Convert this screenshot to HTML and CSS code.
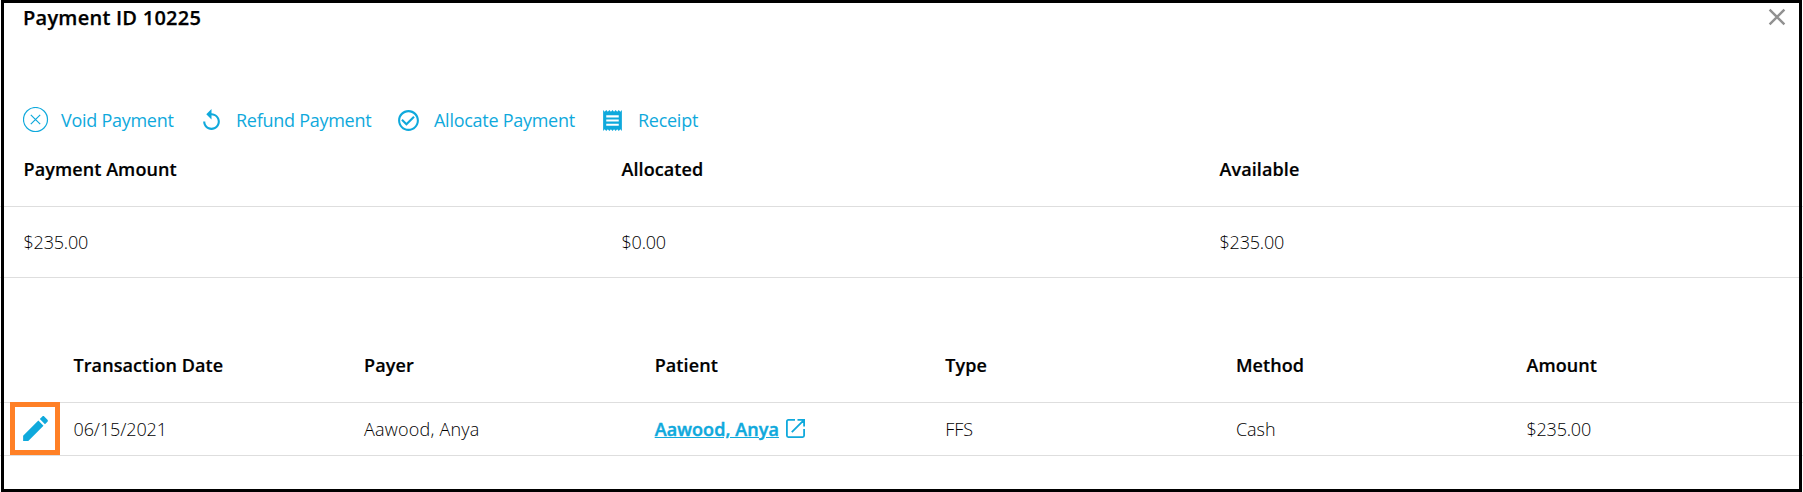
FILE: index.html
```html
<!DOCTYPE html>
<html lang="en">
<head>
<meta charset="utf-8">
<title>Payment ID 10225</title>
<link rel="stylesheet" href="styles.css">
</head>
<body>
<main class="dialog">
  <header class="dialog-header">
    <h1 class="title">Payment ID 10225</h1>
    <svg class="close" width="18" height="18" viewBox="0 0 18 18"><path d="M1.6 1.6 16.4 16.4M16.4 1.6 1.6 16.4"/></svg>
  </header>
  <nav class="actions">
    <a class="action void"><svg width="26" height="26" viewBox="0 0 26 26"><circle class="thin" cx="12.5" cy="12.500" r="12"/><path class="thin" d="M7.800 7.800l9.4 9.4M17.2 7.800l-9.4 9.4"/></svg><span>Void Payment</span></a>
    <a class="action refund"><svg width="25" height="25" viewBox="0 0 24 24"><path d="M12 5V1L7 6l5 5V7c3.31 0 6 2.690 6 6s-2.690 6-6 6-6-2.690-6-6H4c0 4.420 3.580 8 8 8s8-3.580 8-8-3.580-8-8-8z"/></svg><span>Refund Payment</span></a>
    <a class="action allocate"><svg width="25" height="25" viewBox="0 0 24 24"><path d="M16.590 7.580L10 14.170l-3.590-3.580L5 12l5 5 8-8zM12 2C6.480 2 2 6.480 2 12s4.480 10 10 10 10-4.480 10-10S17.520 2 12 2zm0 18c-4.420 0-8-3.580-8-8s3.580-8 8-8 8 3.580 8 8-3.580 8-8 8z"/></svg><span>Allocate Payment</span></a>
    <a class="action receipt"><svg width="25" height="25" viewBox="0 0 24 24"><path d="M18 17H6v-2h12v2zm0-4H6v-2h12v2zm0-4H6V7h12v2zM3 22l1.500-1.500L6 22l1.500-1.500L9 22l1.500-1.500L12 22l1.500-1.500L15 22l1.500-1.500L18 22l1.500-1.500L21 22V2l-1.500 1.500L18 2l-1.500 1.500L15 2l-1.500 1.500L12 2l-1.500 1.500L9 2 7.500 3.500 6 2 4.500 3.500 3 2v20z"/></svg><span>Receipt</span></a>
  </nav>
  <section class="summary">
    <div class="row head"><span>Payment Amount</span><span>Allocated</span><span>Available</span></div>
    <div class="row"><span class="money">$235.00</span><span class="money">$0.00</span><span class="money">$235.00</span></div>
  </section>
  <section class="transactions">
    <div class="row head"><span></span><span>Transaction Date</span><span>Payer</span><span>Patient</span><span>Type</span><span>Method</span><span>Amount</span></div>
    <div class="row">
      <span class="edit"><svg width="33" height="33" viewBox="0 0 24 24"><path d="M3 17.250V21h3.750L17.810 9.940l-3.750-3.750L3 17.250zM20.710 7.040c.39-.39.39-1.020 0-1.410l-2.340-2.340c-.39-.39-1.020-.39-1.410 0l-1.830 1.830 3.750 3.750 1.830-1.830z"/></svg></span>
      <span class="date">06/15/2021</span><span class="name">Aawood, Anya</span>
      <span class="patient"><a class="link">Aawood, Anya</a><svg class="open" width="19" height="19" viewBox="0 0 19 19"><path d="M9 .9H2.400Q.9.900.9 2.400v14.200q0 1.500 1.500 1.500h14.200q1.500 0 1.500-1.500V10M11.500.9h6.600v6.600M18.100.9 5.800 13.200"/></svg></span>
      <span>FFS</span><span>Cash</span><span class="money">$235.00</span>
    </div>
  </section>
</main>
</body>
</html>
```
FILE: styles.css
```css
* { box-sizing: border-box; }
body { margin: 0; background: #fff; }
.dialog {
  position: relative;
  width: 1803px;
  height: 492px;
  overflow: hidden;
  font: 300 18px/24px "Open Sans", sans-serif;
  color: #000;
}
/* frame drawn over the row rules */
.dialog::after {
  content: "";
  position: absolute;
  inset: 0 1px 0 1px;
  border: 3px solid #000;
  pointer-events: none;
}
.dialog-header {
  display: flex;
  justify-content: space-between;
  height: 100px;
  padding: 6px 17px 0 23px;
}
.title { margin: 0; font-size: 20px; font-weight: 600; letter-spacing: .25px; line-height: 24px; color: #000; -webkit-text-stroke: .25px; }
.close { margin-top: 2px; fill: none; stroke: #919191; stroke-width: 2.4; }
.actions { display: flex; height: 40px; padding: 7px 0 0 23px; color: #0fa9dc; font-weight: 400; }
.action { display: flex; height: 26px; align-items: center; white-space: nowrap; }
.action svg { flex: none; fill: #0fa9dc; }
.action span { line-height: 26px; letter-spacing: -.27px; }
.action .thin { fill: none; stroke: #0fa9dc; stroke-width: 1.2; }
.void { width: 176px; gap: 12px; }
.refund { width: 197px; gap: 12px; }
.allocate { width: 204px; gap: 13px; }
.receipt { gap: 13px; }
.row { display: grid; align-items: center; border-bottom: 1px solid #dedede; }
.head { font-weight: 600; letter-spacing: .09px; color: #000; -webkit-text-stroke: .2px; }
.summary .row { grid-template-columns: 598px 598px 1fr; height: 71px; padding-left: 23.5px; }
.summary .head { height: 67px; padding-bottom: 8px; }
.transactions { margin-top: 47px; }
.transactions .row { grid-template-columns: 63.500px repeat(6, 290.6px); height: 53px; padding-left: 10px; }
.transactions .head { height: 78px; padding-top: 3px; }
.edit {
  position: relative;
  z-index: 1;
  display: grid;
  place-items: center;
  width: 50px;
  height: 53px;
  margin-top: -1px;
  border: 5px solid #ff8026;
}
.edit svg { fill: #0fa9dc; }
.open { margin-bottom: 1px; fill: none; stroke: #0fa9dc; stroke-width: 1.8; }
.money { letter-spacing: -.2px; }
.date { letter-spacing: -.1px; }
.name { letter-spacing: .2px; }
.patient { display: flex; align-items: center; gap: 7px; }
.link { color: #0fa9dc; font-weight: 600; letter-spacing: .09px; text-decoration: underline; -webkit-text-stroke: .45px; }
```
